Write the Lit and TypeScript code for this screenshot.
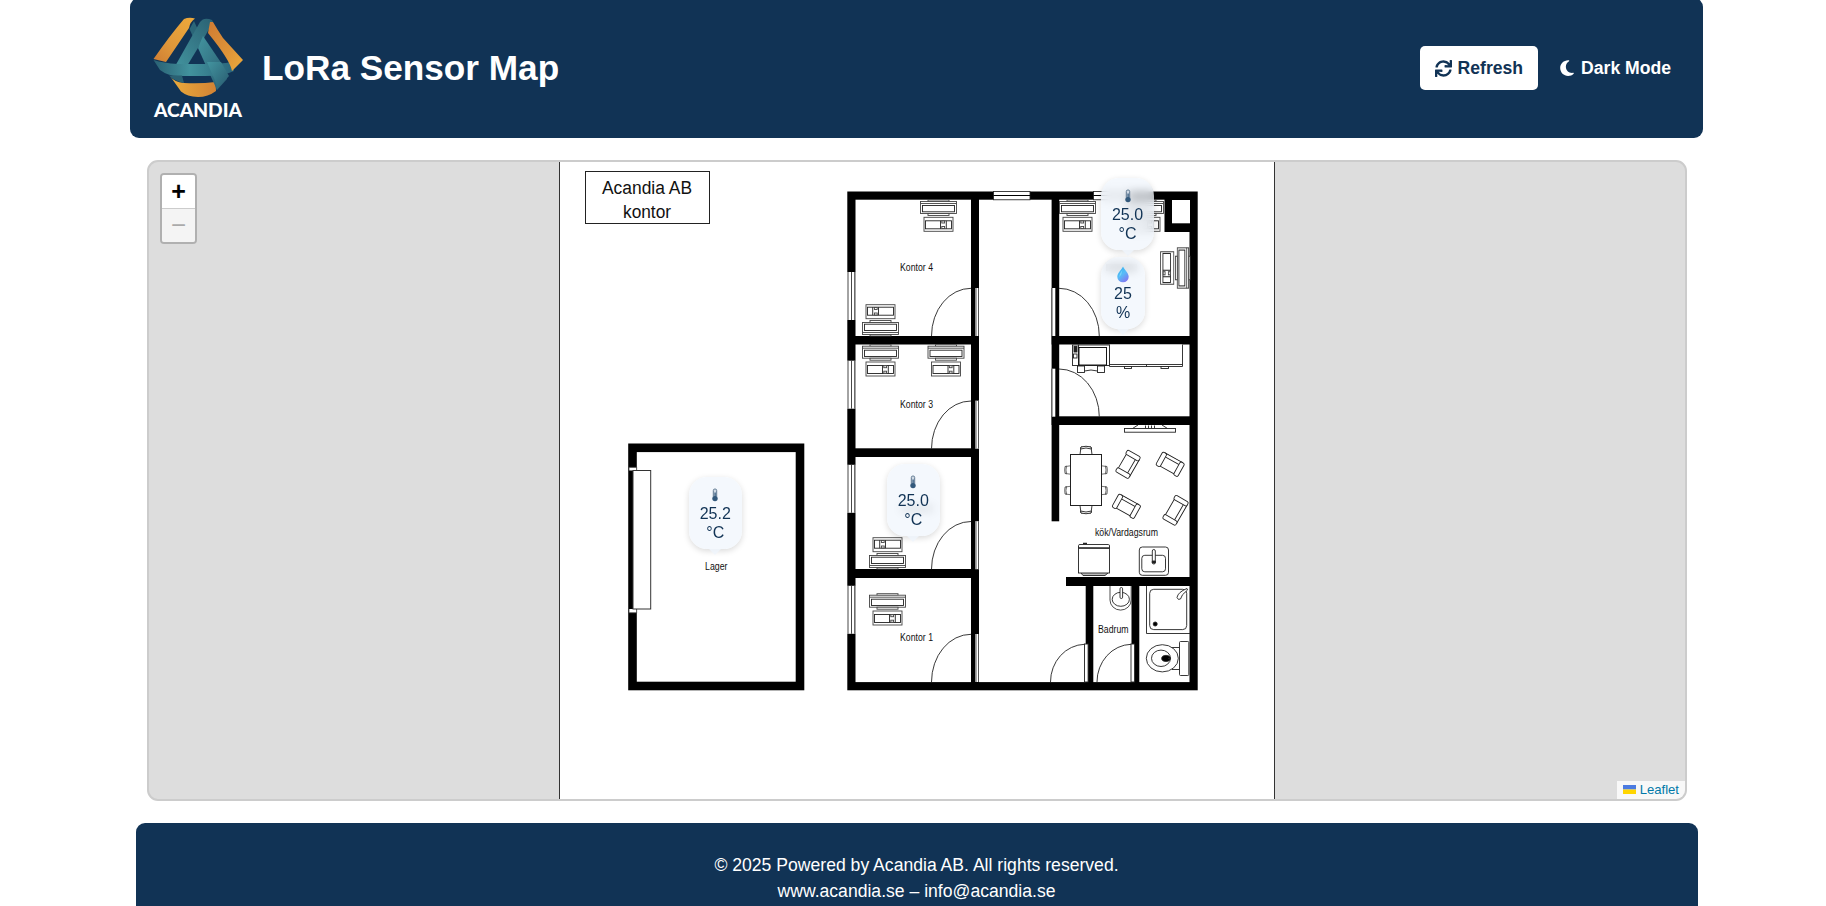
import { LitElement, html, svg, css } from "lit";
import { customElement, property } from "lit/decorators.js";

const NAVY = "#113355";

@customElement("acandia-logo")
class AcandiaLogo extends LitElement {
  static styles = css`
    :host { display: block; width: 92px; height: 104px; }
    svg { display: block; }
    text { font: 900 18.4px Lato, sans-serif; fill: #fff; }
  `;
  render() {
    return html`<svg width="92" height="104" viewBox="152 16 92 104">
      <defs>
        <linearGradient id="o1" x1="1" y1="0" x2="0" y2="1"><stop offset="0" stop-color="#eda93b"/><stop offset=".6" stop-color="#e0983a"/><stop offset="1" stop-color="#cf7d33"/></linearGradient>
        <linearGradient id="o2" x1="0" y1="0" x2="1" y2="1"><stop offset="0" stop-color="#cf7b33"/><stop offset=".6" stop-color="#de9438"/><stop offset="1" stop-color="#ecab3c"/></linearGradient>
        <linearGradient id="o3" x1="0" y1="0" x2="1" y2="0"><stop offset="0" stop-color="#ebac3c"/><stop offset="1" stop-color="#d28334"/></linearGradient>
        <linearGradient id="t1" x1="1" y1="0" x2="0" y2="1"><stop offset="0" stop-color="#2a6173"/><stop offset="1" stop-color="#42929d"/></linearGradient>
        <linearGradient id="t2" x1="0" y1="0" x2="1" y2="1"><stop offset="0" stop-color="#43949f"/><stop offset="1" stop-color="#27596e"/></linearGradient>
        <linearGradient id="t3" x1="0" y1="0" x2="1" y2="0"><stop offset="0" stop-color="#296073"/><stop offset=".45" stop-color="#42929d"/><stop offset="1" stop-color="#29647a"/></linearGradient>
      </defs>
      <path fill="url(#o3)" d="M170 76 Q174 82 184 83 Q200 84 215.500 82 L216 91 Q208 97 198 97 Q187 96.500 181 91.500 Z"/>
      <path fill="#2b6678" d="M189.500 29 L194 21 L199 32 L194 39 Z"/>
      <path fill="url(#t1)" d="M200 22 Q204 16.500 212 20 L213 22 L204 38 L187 66 L176 64.500 Z"/>
      <path fill="url(#t2)" d="M203 36 L198 48 L217 90 L227 79 L226 70 Z"/>
      <path fill="url(#t3)" d="M153.500 60 Q163 63 178 64 L203 64 Q221 64 232 62 L234 71 Q224 76 205 76 L178 76 Q168 76 160 70 Z"/>
      <path fill="#2a6173" d="M169 75.500 L182 75.500 L184 83 Q174 81 169 75.500 Z"/>
      <path fill="url(#t2)" d="M207 62 L221 62 L229 76 L216.500 90 Q217 84 213 76 Z"/>
      <path fill="url(#o1)" d="M153.500 59 Q171 34 184 19 Q189 17 195 18.500 Q190 22 189 28 L166 62 Z"/>
      <path fill="url(#o2)" d="M210 22 L213 22 Q217 29 223 38 L243 60 L232 71 Q230 60 208 33 Z"/>
      <text x="154" y="117" textLength="88" lengthAdjust="spacingAndGlyphs">ACANDIA</text>
    </svg>`;
  }
}

@customElement("sensor-card")
class SensorCard extends LitElement {
  @property() kind = "temp";
  @property() value = "";
  @property() unit = "";
  static styles = css`
    :host {
      display: flex; flex-direction: column; align-items: center;
      box-sizing: border-box; height: 72px; padding-top: 10px;
      border-radius: 18px; background: rgba(240, 245, 252, 0.74);
      backdrop-filter: blur(5px);
      box-shadow: 0 2px 6px rgba(0, 0, 0, 0.15);
      font: 16px/19px "Liberation Sans", Arial, sans-serif; color: #113355;
    }
    .icon { height: 17px; display: block; }
    .drop { margin-top: -1.500px; margin-bottom: 1.500px; }
    .tip {
      position: absolute; top: 72px; left: 50%; margin-left: -6px;
      border: 6px solid transparent; border-bottom: 0; border-top-color: rgba(238, 244, 252, 0.85);
    }
  `;
  render() {
    const icon = this.kind === "temp"
      ? html`<svg class="icon" width="8" height="17" viewBox="0 0 8 17">
          <rect x="2.300" y="2" width="3.400" height="9" rx="1.500" fill="#cfd9e4" stroke="#5f7890" stroke-width="1"/>
          <rect x="3.400" y="5.500" width="1.400" height="6" fill="#3d6184"/>
          <circle cx="4" cy="11.600" r="2.700" fill="#33597c"/></svg>`
      : html`<svg class="icon drop" width="14" height="17" viewBox="0 0 14 17">
          <defs><linearGradient id="d" x1="0" y1="0" x2=".6" y2="1"><stop offset=".1" stop-color="#35b0ee"/><stop offset=".55" stop-color="#57bdf7"/><stop offset="1" stop-color="#7f7df2"/></linearGradient></defs>
          <path d="M7 .5 C8.500 4 12.700 7 12.700 10.800 A5.700 5.500 0 0 1 1.300 10.800 C1.300 7 5.500 4 7 .5Z" fill="url(#d)"/>
          <path d="M6.500 4 Q3 8 3.500 11 Q6 8 6.500 4Z" fill="#8fdcfb" opacity=".7"/></svg>`;
    return html`${icon}<span>${this.value}</span><span>${this.unit}</span><i class="tip"></i>`;
  }
}

/* Computer desk: monitor against the wall (y = 0), keyboard in front. */
const desk = (x: number, y: number, rot = 0, sx = 1, sy = 1) => svg`
  <g transform="translate(${x} ${y}) rotate(${rot}) scale(${sx} ${sy})" fill="#fff" stroke="#444" stroke-width=".9">
    <rect x="-10.500" y="0" width="21" height="2"/>
    <rect x="-18" y="1.500" width="36" height="12"/>
    <path d="M-18 3.500H18"/>
    <rect x="-16" y="5.500" width="32" height="6.300" stroke="#222"/>
    <rect x="-10.500" y="13.500" width="21" height="2"/>
    <rect x="-14.500" y="17.300" width="29" height="14"/>
    <rect x="-13" y="20.800" width="26" height="8" stroke="#222"/>
    <path d="M2 20.800v8M7.800 20.800v8" stroke="#222"/>
    <rect x="3.300" y="21" width="2.800" height="2"/><rect x="3.300" y="26.500" width="2.800" height="2"/>
  </g>`;

const armchair = (x: number, y: number, rot: number, h = 25) => svg`
  <g transform="translate(${x} ${y}) rotate(${rot})" fill="#fff" stroke="#222" stroke-width=".9">
    <rect x="-6.500" y="${-h / 2 + 3}" width="13.500" height="${h - 6}"/>
    <rect x="4" y="${-h / 2 + 3}" width="3.500" height="${h - 6}"/>
    <rect x="-7.500" y="${-h / 2}" width="15" height="4.800" rx="1.600"/>
    <rect x="-7.500" y="${h / 2 - 4.8}" width="15" height="4.800" rx="1.600"/>
  </g>`;

const seat = (x: number, y: number, rot: number, s = 1) => svg`
  <g transform="translate(${x} ${y}) rotate(${rot}) scale(${s})" fill="#fff" stroke="#222" stroke-width=".9">
    <path d="M-6 0L-5 -7.500H5L6 0Z"/><path d="M-5.500 -5.500Q0 -7.500 5.500 -5.500L5 -7.500Q0 -9 -5 -7.500Z"/>
  </g>`;

const leftWindow = (y: number) => svg`
  <rect x="847" y="${y}" width="8.500" height="48" fill="#fff"/>
  <path d="M848 ${y}v48M851.500 ${y}v48M854.700 ${y}v48" stroke="#333" stroke-width=".9"/>`;

const topWindow = (x: number) => svg`
  <rect x="${x}" y="191.500" width="36.500" height="8.300" fill="#fff" stroke="#222" stroke-width=".8"/>
  <path d="M${x} 195.500h37" stroke="#000"/>`;

const leftDoor = (y: number) => svg`
  <rect x="975.200" y="${y}" width="4" height="48" fill="#fff"/>
  <path d="M978.500 ${y}v48M976 ${y}v48" stroke="#444" stroke-width=".9"/>
  <path d="M971 ${y + 0.3}A39.500 47.700 0 0 0 931.500 ${y + 48}" fill="none" stroke="#222" stroke-width=".9"/>`;

const rightDoor = (y: number) => svg`
  <rect x="1052" y="${y}" width="3.300" height="48" fill="#fff"/>
  <path d="M1052 ${y}v48" stroke="#222" stroke-width=".8"/>
  <path d="M1059 ${y + 0.3}A40.300 47.700 0 0 1 1099.300 ${y + 48}" fill="none" stroke="#222" stroke-width=".9"/>`;

const bathDoor = (x: number) => svg`
  <rect x="${x}" y="644" width="3.600" height="38" fill="#fff" stroke="#222" stroke-width=".9"/>
  <path d="M${x} 644.300A35 37.700 0 0 0 ${x - 34} 682" fill="none" stroke="#222" stroke-width=".9"/>`;

const label = (text: string, x: number, y: number, w: number) => svg`
  <text class="room" x="${x}" y="${y}" textLength="${w}" lengthAdjust="spacingAndGlyphs">${text}</text>`;

@customElement("floor-plan")
class FloorPlan extends LitElement {
  static styles = css`
    :host { display: block; }
    svg { display: block; }
    text { font-family: "Liberation Sans", Arial, sans-serif; fill: #111; }
    .title { font-size: 18.800px; }
    .room { font-size: 10px; }
  `;
  render() {
    return html`<svg width="1536" height="637" viewBox="149 162 1536 637">
      <rect x="559" y="162" width="716" height="637" fill="#fff"/>
      <path d="M559.500 162V799M1274.500 162V799" stroke="#333"/>
      <rect x="585.500" y="171.500" width="124" height="52" fill="#fff" stroke="#222"/>
      <text class="title" x="602" y="194.300" textLength="90" lengthAdjust="spacingAndGlyphs">Acandia AB</text>
      <text class="title" x="623" y="217.500" textLength="48" lengthAdjust="spacingAndGlyphs">kontor</text>

      <rect x="632.500" y="447.800" width="167.500" height="238.200" fill="none" stroke="#000" stroke-width="8.600"/>
      <rect x="629" y="467.300" width="7.700" height="145.500" fill="#fff" stroke="#444" stroke-width=".8"/>
      <rect x="629" y="470.500" width="4.500" height="138.500" fill="#000"/>
      <rect x="633" y="470.500" width="17.700" height="138.500" fill="#fff" stroke="#333"/>
      ${label("Lager", 705, 569.5, 22.5)}

      <rect x="851.400" y="195.600" width="342.200" height="490.600" fill="none" stroke="#000" stroke-width="8.200"/>
      <g fill="#000">
        <rect x="971" y="196" width="8" height="490"/>
        <rect x="851" y="336" width="128" height="8.500"/>
        <rect x="851" y="448.300" width="128" height="8.700"/>
        <rect x="851" y="569" width="128" height="9"/>
        <rect x="1051.600" y="196" width="7.600" height="325.300"/>
        <rect x="1051.600" y="336" width="142" height="8.500"/>
        <rect x="1051.600" y="416.300" width="142" height="8.700"/>
        <rect x="1066" y="577" width="128" height="9"/>
        <rect x="1085.700" y="580" width="7.600" height="104"/>
        <rect x="1131.500" y="580" width="7.800" height="104"/>
        <rect x="1164.500" y="196" width="28" height="36"/>
      </g>
      <rect x="1172" y="200" width="18" height="23.300" fill="#fff"/>
      ${[272, 360.7, 464.8, 585.8].map(leftWindow)}
      ${[993.5, 1093.5].map(topWindow)}
      ${[288, 400.7, 521.2, 634].map(leftDoor)}
      ${[288, 368.7].map(rightDoor)}
      ${[1084.5, 1131].map(bathDoor)}

      ${desk(938.5, 200)}
      ${desk(880.5, 336, 180)}
      ${desk(880.5, 344.7)}
      ${desk(946, 344.7)}
      ${desk(887.5, 569, 180)}
      ${desk(887.5, 593.7)}
      ${desk(1077.5, 200)}
      ${desk(1145.5, 200)}
      ${desk(1190, 268, 90, 1.12, 0.94)}

      ${label("Kontor 4", 900, 270.7, 33)}
      ${label("Kontor 3", 900, 407.5, 33)}
      ${label("Kontor 1", 900, 640.5, 33)}
      ${label("kök/Vardagsrum", 1095, 536, 63)}
      ${label("Badrum", 1098, 632.7, 30.5)}
      <rect x="901" y="505" width="32" height="7" fill="#aaa"/>
      <rect x="1106" y="264" width="31" height="7" fill="#777"/>

      <g fill="#fff" stroke="#222" stroke-width=".9">
        <rect x="1072.500" y="345" width="6" height="20.500"/>
        <rect x="1074" y="346.500" width="3" height="5.500" fill="#222"/>
        <rect x="1073.500" y="354" width="3.500" height="4"/>
        <rect x="1078.500" y="345" width="31" height="20.500"/>
        <rect x="1079" y="347.500" width="27.500" height="17.500" stroke="#000"/>
        <rect x="1077.500" y="366" width="7" height="6.500"/>
        <rect x="1097.500" y="366" width="7" height="6.500"/>
        <path d="M1084.500 371Q1091 369 1097.500 371" fill="none"/>
        <path d="M1109.500 344.500V366.500H1182.500V344.500M1109.500 364.500H1182.500M1146.500 364.500v2"/>
        <rect x="1124.500" y="366.500" width="7" height="2"/><rect x="1161" y="366.500" width="7.500" height="2"/>
        <path d="M1138 425L1132.500 428.500M1162 425L1167.500 428.500M1145.500 425.500v3M1148.500 425.500v3M1151.500 425.500v3M1154.500 425.500v3"/>
        <rect x="1124.500" y="428.500" width="51" height="3.700"/>
      </g>

      ${seat(1086, 454.5, 0)}${seat(1086, 505.5, 180)}
      ${seat(1070.5, 470, -90, 0.7)}${seat(1070.5, 490.5, -90, 0.7)}
      ${seat(1101.5, 470, 90, 0.7)}${seat(1101.5, 490.5, 90, 0.7)}
      <rect x="1070.500" y="454.500" width="31" height="51" fill="#fff" stroke="#222"/>
      ${armchair(1128, 464.3, 30)}
      ${armchair(1170.2, 464.3, -61)}
      ${armchair(1126.4, 506.3, -61)}
      ${armchair(1175.5, 510.3, 30, 27)}

      <g fill="#fff" stroke="#222" stroke-width=".9">
        <path d="M1081 573L1083 575.500H1105L1108 573" fill="#bbb"/>
        <rect x="1078.500" y="546.500" width="31" height="26.500"/>
        <path d="M1078.500 548V545.500Q1078.500 544.500 1080 544.500H1108.500Q1109.500 544.500 1109.500 546V548.300Z"/>
        <path d="M1078.500 548H1109.500" stroke-width="1.300"/>
        <path d="M1083 543.500h4" stroke-width="1.500"/>
        <rect x="1139.300" y="547" width="29.200" height="28.300" rx="3"/>
        <rect x="1141.800" y="555.300" width="23.700" height="16.500" rx="3"/>
        <rect x="1152.300" y="549.500" width="3" height="14.500" rx="1.500"/>
        <path d="M1152.300 561h3v2h-3z" fill="#222"/>

        <path d="M1110 586V600A10.500 10 0 0 0 1131.200 600V586" stroke-width=".8"/>
        <ellipse cx="1120.800" cy="599.300" rx="8.600" ry="7"/>
        <rect x="1120" y="587.500" width="2.600" height="11" rx="1.300"/>
        <path d="M1146.500 586V633.500H1190" fill="none"/>
        <rect x="1149.700" y="589.300" width="37" height="40.300" rx="4"/>
        <circle cx="1155.200" cy="624" r="2" fill="#000"/>
        <path d="M1187 588.500Q1178 592 1177 597.500Q1178 600.500 1180.500 599Q1181 595 1187.500 590Z"/>
        <path d="M1172 647.500H1180V669.500H1172Z"/>
        <rect x="1179.500" y="641.500" width="9.300" height="34" rx="1"/>
        <ellipse cx="1162.300" cy="658.300" rx="16" ry="13.600"/>
        <ellipse cx="1161" cy="658.300" rx="9.500" ry="8.200"/>
        <ellipse cx="1166" cy="658.400" rx="4.300" ry="3" fill="#000"/>
        <path d="M1168 658.400h3"/>
      </g>
    </svg>`;
  }
}

const SENSORS = [
  { kind: "temp", value: "25.2", unit: "°C", left: 539.5, top: 315, width: 53.5 },
  { kind: "temp", value: "25.0", unit: "°C", left: 737.5, top: 302, width: 53.5 },
  { kind: "temp", value: "25.0", unit: "°C", left: 952, top: 16, width: 53 },
  { kind: "humidity", value: "25", unit: "%", left: 952, top: 95, width: 44 },
];

@customElement("app-root")
class AppRoot extends LitElement {
  static styles = css`
    :host {
      display: flex; flex-direction: column; align-items: center;
      box-sizing: border-box; height: 906px; overflow: hidden; background: #fff;
      font-family: "Liberation Sans", Arial, sans-serif;
    }
    header {
      box-sizing: border-box; width: 1573px; height: 140px; margin-top: -2px; flex: none;
      margin-left: 7px; margin-right: 0;
      padding: 0 32px 0 22px; border-radius: 9px; background: #113355; color: #fff;
      display: flex; align-items: center;
    }
    h1 { margin: 0 auto 0 18px; font-size: 35.200px; line-height: 40px; font-weight: 700; }
    button {
      font: 700 17.600px/20px "Liberation Sans", Arial, sans-serif; border: 0; height: 44px;
      display: flex; align-items: center; white-space: nowrap;
    }
    .refresh { width: 118px; padding: 0 0 0 15px; gap: 5.500px; border-radius: 5px; background: #fff; color: #113355; }
    .dark { padding: 0; margin-left: 22px; gap: 7px; background: none; color: #fff; }
    .map {
      position: relative; box-sizing: border-box; width: 1540px; height: 641px; margin: 22px 0 0 8px; flex: none;
      border: 2px solid #ccc; border-radius: 11px; background: #ddd; overflow: hidden;
    }
    .marker { position: absolute; }
    .zoom {
      position: absolute; left: 11px; top: 11px; width: 33px; border: 2px solid rgba(0, 0, 0, 0.2);
      border-radius: 4px; background-clip: padding-box; display: flex; flex-direction: column;
    }
    .zoom span {
      box-sizing: border-box; height: 33px; font: 700 25px/32px "Liberation Sans", sans-serif; text-align: center;
      background: #fff; color: #000; border-radius: 2px 2px 0 0;
    }
    .zoom .out {
      height: 34px; border-top: 1px solid #ccc; background: #f4f4f4; color: #aaa; border-radius: 0 0 2px 2px;
      font-weight: 400; font-size: 26px;
    }
    .attribution {
      position: absolute; right: 0; bottom: 0; box-sizing: border-box; height: 18px; padding: 0 6px 2px;
      background: rgba(255, 255, 255, 0.8);
      display: flex; align-items: center; gap: 3.500px; font-size: 13.100px; color: #0078a8;
    }
    footer {
      box-sizing: border-box; width: 1562px; height: 100px; flex: none; margin: 22px 0 0 8px; padding: 29px 1px 0 0;
      border-radius: 9px; background: #113355; color: #fff; text-align: center;
      font-size: 17.600px; line-height: 26.400px;
    }
  `;
  render() {
    return html`
      <header>
        <acandia-logo></acandia-logo>
        <h1>LoRa Sensor Map</h1>
        <button class="refresh">
          <svg width="17" height="17" viewBox="0 0 512 512" fill=${NAVY}><path d="M440.650 12.570l4 82.770A247.160 247.160 0 0 0 255.830 8C134.730 8 33.910 94.920 12.290 209.820A12 12 0 0 0 24.090 224h49.050a12 12 0 0 0 11.670-9.260 175.910 175.910 0 0 1 317-56.940l-101.460-4.860a12 12 0 0 0-12.570 12v47.410a12 12 0 0 0 12 12H500a12 12 0 0 0 12-12V12a12 12 0 0 0-12-12h-47.370a12 12 0 0 0-11.980 12.570zM255.830 432a175.610 175.610 0 0 1-146-77.800l101.800 4.870a12 12 0 0 0 12.570-12v-47.400a12 12 0 0 0-12-12H12a12 12 0 0 0-12 12V500a12 12 0 0 0 12 12h47.350a12 12 0 0 0 12-12.600l-4.150-82.570A247.170 247.170 0 0 0 255.830 504c121.110 0 221.930-86.920 243.550-201.820a12 12 0 0 0-11.800-14.180h-49.050a12 12 0 0 0-11.670 9.260A175.860 175.860 0 0 1 255.830 432z"/></svg>
          <span>Refresh</span>
        </button>
        <button class="dark">
          <svg width="14" height="18.200" viewBox="0 0 384 512" fill="#fff"><path d="M223.500 32C100 32 0 132.300 0 256S100 480 223.500 480c60.600 0 115.500-24.200 155.800-63.400c5-4.900 6.300-12.500 3.100-18.700s-10.100-9.700-17-8.500c-9.800 1.700-19.800 2.600-30.100 2.600c-96.900 0-175.500-78.800-175.500-176c0-65.800 36-123.100 89.300-153.300c6.100-3.500 9.200-10.500 7.700-17.300s-7.300-11.900-14.300-12.500c-6.300-.5-12.600-.8-19-.8z"/></svg>
          <span>Dark Mode</span>
        </button>
      </header>
      <div class="map">
        <floor-plan></floor-plan>
        ${SENSORS.map((s) => html`<sensor-card class="marker" style="left:${s.left}px;top:${s.top}px;width:${s.width}px"
          .kind=${s.kind} .value=${s.value} .unit=${s.unit}></sensor-card>`)}
        <div class="zoom"><span>+</span><span class="out">−</span></div>
        <div class="attribution">
          <svg width="13" height="9" viewBox="0 0 13 9"><rect width="13" height="4.500" fill="#4c7be1"/><rect y="4.500" width="13" height="4.500" fill="#ffd500"/></svg>
          <span>Leaflet</span>
        </div>
      </div>
      <footer>
        <div>© 2025 Powered by Acandia AB. All rights reserved.</div>
        <div>www.acandia.se – info@acandia.se</div>
      </footer>`;
  }
}
